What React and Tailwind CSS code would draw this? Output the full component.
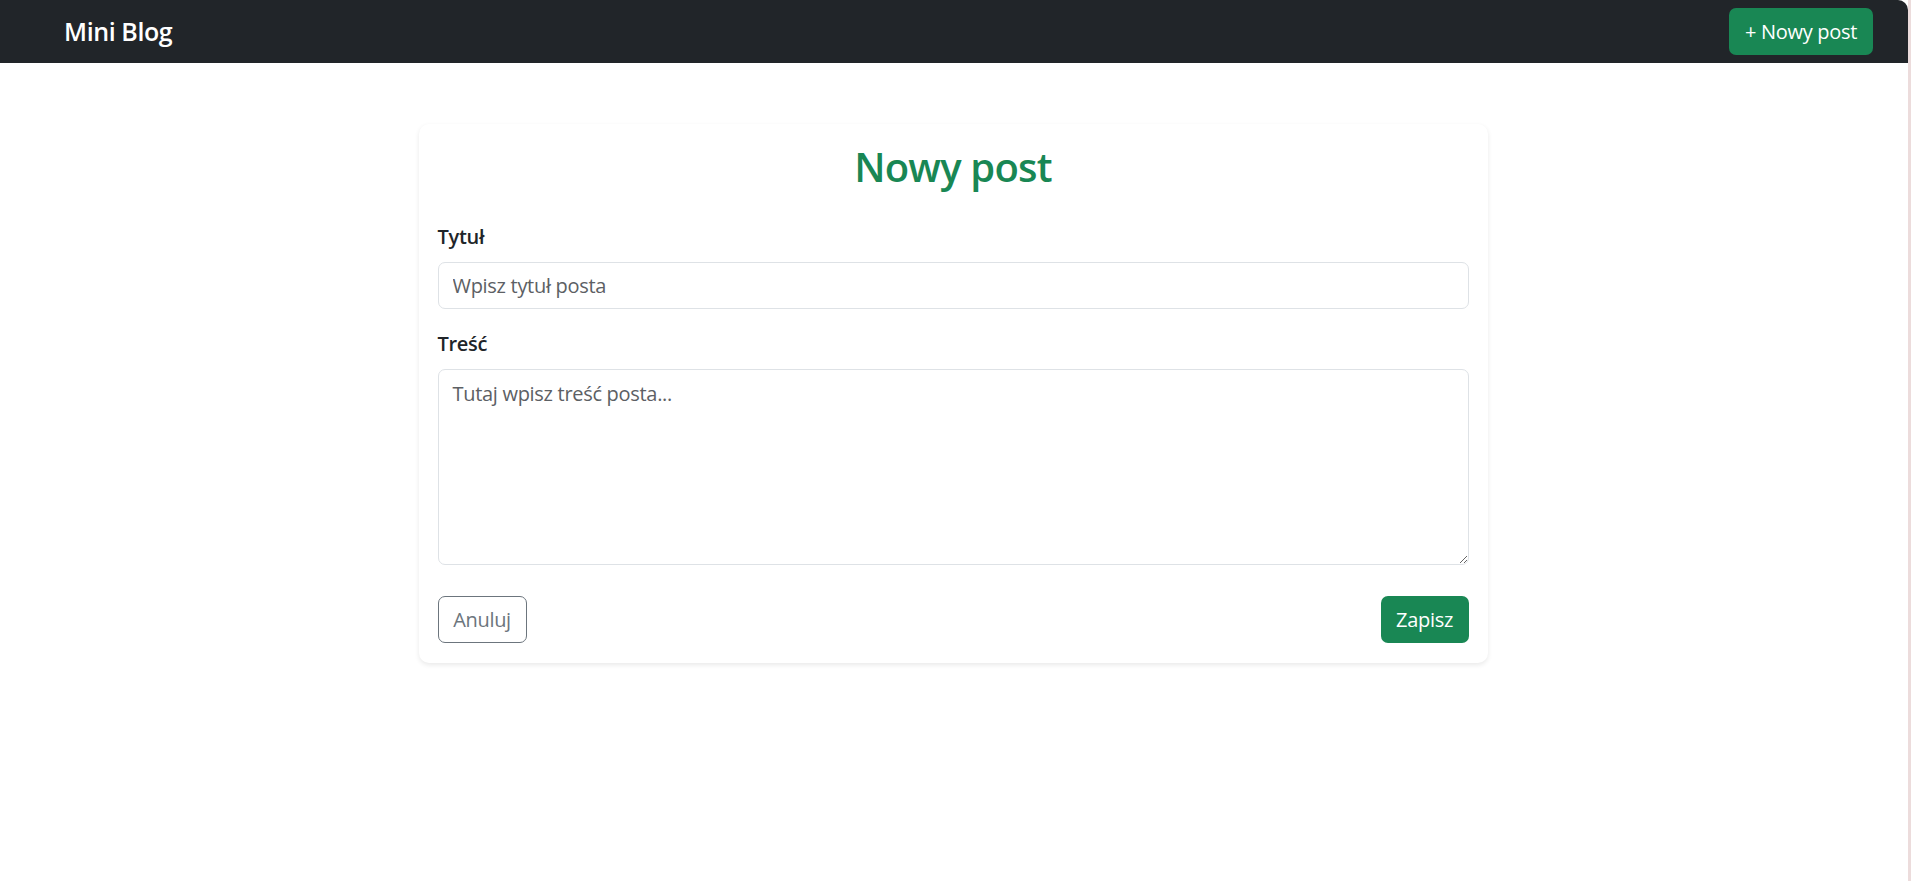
import React, { useState } from 'react';

const font = { fontFamily: '"Open Sans", "Noto Sans", sans-serif' };

export default function App() {
  const [title, setTitle] = useState('');
  const [content, setContent] = useState('');

  return (
    <div className="min-h-screen flex bg-white text-[#212529]" style={font}>
      <div className="flex-1 flex flex-col">
        {/* navbar */}
        <nav className="h-[63px] flex items-center justify-between bg-[#212529] pl-[64px] pr-[35px] rounded-tr-[10px]">
          <span className="text-[25px] font-semibold text-white tracking-[-0.4px]">Mini Blog</span>
          <button className="h-[47px] px-[16px] rounded-[7px] bg-[#198754] text-white text-[20px] leading-[30px] tracking-[-0.3px]">
            + Nowy post
          </button>
        </nav>

        {/* form card */}
        <div className="pr-[2px]">
          <div className="mx-auto mt-[61px] w-[1069px] rounded-[10px] bg-white p-[19px] pb-[20px] shadow-[0_2px_5px_rgba(0,0,0,0.09)]">
            <h2 className="text-center text-[40px] leading-[48px] font-semibold text-[#198754] tracking-[-0.8px] mb-[31px]">
              Nowy post
            </h2>

            <label className="block text-[20px] leading-[30px] font-semibold mb-[10px] tracking-[-0.3px]">Tytuł</label>
            <input
              type="text"
              value={title}
              onChange={e => setTitle(e.target.value)}
              placeholder="Wpisz tytuł posta"
              className="block w-full h-[47px] border border-[#dee2e6] rounded-[7px] px-[14px] text-[20px] leading-[30px] tracking-[-0.3px] placeholder:text-[#5c6064] outline-none mb-[20px]"
            />

            <label className="block text-[20px] leading-[30px] font-semibold mb-[10px] tracking-[-0.3px]">Treść</label>
            <textarea
              value={content}
              onChange={e => setContent(e.target.value)}
              placeholder="Tutaj wpisz treść posta..."
              className="block w-full h-[196px] border border-[#dee2e6] rounded-[7px] px-[14px] py-[9px] text-[20px] leading-[30px] tracking-[-0.3px] placeholder:text-[#5c6064] outline-none mb-[31px]"
            />

            <div className="flex justify-between">
              <button className="w-[89px] h-[47px] rounded-[7px] border border-[#6c757d] text-[#6c757d] text-[20px] tracking-[-0.3px]">
                Anuluj
              </button>
              <button className="w-[88px] h-[47px] rounded-[7px] bg-[#198754] text-white text-[20px] tracking-[-0.3px]">
                Zapisz
              </button>
            </div>
          </div>
        </div>
      </div>
      <div className="w-[3px] bg-[#ecdcdc]" />
    </div>
  );
}
